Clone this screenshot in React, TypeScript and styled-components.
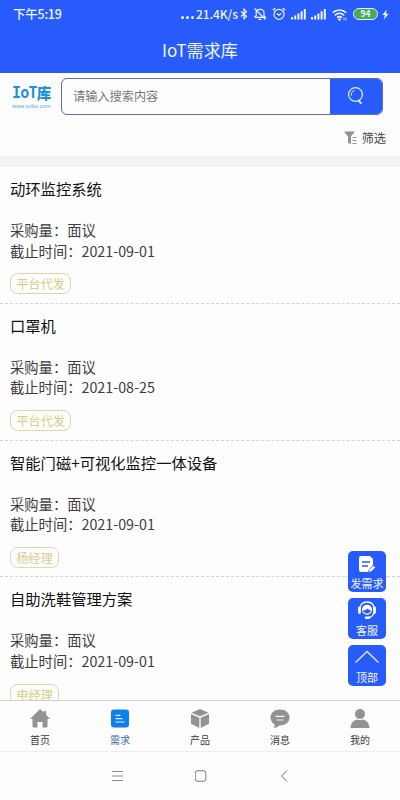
import React from "react";
import styled, { createGlobalStyle } from "styled-components";

const BLUE = "#285bfb";

const GlobalStyle = createGlobalStyle`
  * { box-sizing: border-box; }
  body {
    margin: 0;
    background: #fdfdfd;
    font-family: "Noto Sans CJK SC", "Noto Sans", sans-serif;
  }
`;

const Screen = styled.div`
  position: relative;
  width: 400px;
  height: 800px;
  display: flex;
  flex-direction: column;
  overflow: hidden;
  background: #fdfdfd;
`;

const Header = styled.header`
  flex: none;
  height: 73px;
  background: ${BLUE};
  color: #eef6ff;
`;

const StatusBar = styled.div`
  height: 28px;
  padding: 0 11px 0 13px;
  display: flex;
  align-items: center;
  justify-content: space-between;
`;

const Clock = styled.span`
  font-size: 12.5px;
  font-weight: 500;
  line-height: 28px;
  letter-spacing: -0.25px;
`;

const StatusIcons = styled.div`
  display: flex;
  align-items: center;
  svg { display: block; }
`;

const Dots = styled.span`
  display: flex;
  gap: 2px;
  margin: 6px 2px 0 0;
  i { width: 3px; height: 3px; border-radius: 50%; background: currentColor; }
`;

const Speed = styled.span`
  width: 41px;
  font-size: 12px;
  font-weight: 500;
  line-height: 28px;
  letter-spacing: -0.1px;
  white-space: nowrap;
`;

const Icon = styled.span<{ $gap: number }>`
  margin-left: ${(p) => p.$gap}px;
`;

const Battery = styled.span`
  width: 25px;
  height: 12px;
  margin-left: 6px;
  border: 1.3px solid #e2f3ff;
  border-radius: 6px;
  background: #48a957;
  background-clip: padding-box;
  font-size: 8.5px;
  font-weight: 700;
  line-height: 9.5px;
  text-align: center;
`;

const PageTitle = styled.h1`
  margin: 0;
  height: 43px;
  font-size: 17.1px;
  font-weight: 400;
  line-height: 43px;
  text-align: center;
`;

const SearchPanel = styled.section`
  flex: none;
  height: 84px;
  border-bottom: 1px solid #ececf1;
`;

const SearchRow = styled.div`
  display: flex;
  padding: 5px 17px 0 12px;
`;

const Logo = styled.div`
  width: 49px;
  padding-top: 5px;
  color: #1f8fe0;
`;

const LogoName = styled.div`
  display: flex;
  align-items: center;
  height: 20px;
  font-family: "DejaVu Sans Mono", "Noto Sans CJK SC", monospace;
  font-size: 15px;
  font-weight: 700;
  letter-spacing: -0.8px;
  line-height: 20px;
  white-space: nowrap;
  b {
    font-family: "Noto Sans CJK SC", sans-serif;
    font-size: 14.5px;
    font-weight: 900;
    letter-spacing: 0;
  }
`;

const LogoUrl = styled.div`
  font-family: "Liberation Sans", sans-serif;
  font-size: 5.6px;
  line-height: 6px;
  letter-spacing: 0.1px;
  color: #5aa6df;
`;

const SearchBox = styled.div`
  flex: 1;
  height: 37px;
  display: flex;
  border: 1px solid #5a70a8;
  border-radius: 6px;
  overflow: hidden;
`;

const SearchInput = styled.div`
  flex: 1;
  padding-left: 11px;
  font-size: 12.2px;
  line-height: 34px;
  color: #777;
`;

const SearchButton = styled.button`
  width: 53px;
  margin: -1px -1px -1px 0;
  padding: 0 1px 2px 0;
  border: 0;
  background: ${BLUE};
  display: flex;
  align-items: center;
  justify-content: center;
`;

const FilterRow = styled.div`
  display: flex;
  justify-content: flex-end;
  align-items: center;
  gap: 5px;
  height: 20px;
  margin-top: 13px;
  padding-right: 14px;
  font-size: 12.2px;
  line-height: 20px;
  color: #444;
`;

const Gap = styled.div`
  flex: none;
  height: 10px;
  background: #f4f4f5;
`;

const List = styled.main`
  flex: 1;
  min-height: 0;
  overflow: hidden;
`;

const Item = styled.article`
  height: 136.8px;
  padding: 10px 10px 0;
  border-bottom: 1px dashed #d2d2d6;
`;

const ItemTitle = styled.h2`
  margin: 0 0 20px;
  font-size: 15.3px;
  font-weight: 400;
  line-height: 23px;
  color: #111;
`;

const Meta = styled.p`
  margin: 0;
  height: 20.6px;
  font-size: 14.3px;
  line-height: 20.6px;
  color: #3d3d3d;
`;

const Tag = styled.span<{ $warm?: boolean }>`
  display: block;
  width: fit-content;
  height: 21px;
  margin-top: 12px;
  padding: 0 5.5px;
  border: 1px solid ${(p) => (p.$warm ? "#dfd8b4" : "#dbd7a4")};
  border-radius: 7.5px;
  font-size: 12.1px;
  line-height: 19px;
  color: ${(p) => (p.$warm ? "#dccb8d" : "#d5ce85")};
`;

const FloatStack = styled.aside`
  position: absolute;
  right: 14px;
  top: 551px;
  display: flex;
  flex-direction: column;
  gap: 6px;
`;

const FloatButton = styled.button`
  width: 38px;
  height: 41px;
  padding: 3px 0 0;
  border: 0;
  border-radius: 5px;
  background: ${BLUE};
  color: #f3f8ff;
  display: flex;
  flex-direction: column;
  align-items: center;
  font-family: inherit;
  font-size: 11px;
  line-height: 18px;
  white-space: nowrap;
  svg { flex: none; display: block; }
`;

const TabBar = styled.nav`
  flex: none;
  height: 52px;
  display: grid;
  grid-template-columns: repeat(5, 1fr);
  border-top: 1px solid #cfcfd2;
  border-bottom: 1px solid #eeeef0;
`;

const Tab = styled.div<{ $active?: boolean }>`
  display: flex;
  flex-direction: column;
  align-items: center;
  padding-top: 7px;
  font-size: 10px;
  line-height: 16px;
  color: ${(p) => (p.$active ? "#3c66b4" : "#3c3c3c")};
  svg { display: block; margin-bottom: 3px; }
`;

const SystemNav = styled.footer`
  flex: none;
  height: 48px;
  padding-left: 2px;
  display: flex;
  justify-content: center;
  align-items: center;
  gap: 70px;
`;

const Signal = () => (
  <svg width="15" height="12" viewBox="0 0 15 12" fill="currentColor">
    <path d="M0 9h2v2.500H0zM3.200 7.500h2v4h-2zM6.400 5.500h2v6h-2zM9.600 3.200h2v8.300h-2zM12.800 1h2v10.500h-2z" />
  </svg>
);

const Bluetooth = () => (
  <svg width="8" height="12" viewBox="0 0 8 12" fill="none" stroke="currentColor" strokeWidth="1.200">
    <path d="M1 3.500 6.500 8.300 4 10.800V1.200l2.500 2.500L1 8.500" />
  </svg>
);

const BellOff = () => (
  <svg width="14" height="14" viewBox="0 0 14 14" fill="none" stroke="currentColor" strokeWidth="1.200">
    <path d="M1.500 10.300h10.800L11 8.800V5.500C11 3.500 9.300 2.300 7 2.300S3.200 3.500 3.200 5.500v3.300L1.500 10.300M5.500 12.300h3M1.500 1.500l11 11" />
  </svg>
);

const Alarm = () => (
  <svg width="14" height="14" viewBox="0 0 14 14" fill="none" stroke="currentColor" strokeWidth="1.200">
    <circle cx="7" cy="7.300" r="5" />
    <path d="M4.800 6.500 7 8.200l2.300-1.700M.8 3.300 3.300 1M13.200 3.300 10.700 1" />
  </svg>
);

const Wifi = () => (
  <svg width="15" height="13" viewBox="0 0 15 13" fill="none" stroke="currentColor" strokeWidth="1.600">
    <path d="M.7 4.700c4-3.700 9.600-3.700 13.600 0M2.800 7.300c2.800-2.600 6.600-2.600 9.400 0M5 9.700c1.600-1.300 3.400-1.300 5 0" />
    <path d="M6 11h3l-1.500 1.800zM12 9.500v3M14 9.500v3" strokeWidth=".8" fill="currentColor" />
  </svg>
);

const Bolt = () => (
  <svg width="7" height="11" viewBox="0 0 7 11" fill="currentColor">
    <path d="M4.700.5.300 6h2.500L2 10.500 6.700 4.700H4z" />
  </svg>
);

const SearchIcon = () => (
  <svg width="18" height="20" viewBox="0 0 18 20" fill="none" stroke="#d5ecff" strokeLinecap="round">
    <circle cx="8.500" cy="8.500" r="6.900" strokeWidth="1.300" />
    <path d="M4.300 9.200c-.3-2.300 1-4.200 3-4.800" strokeWidth="1" />
    <path d="m11.800 14.700 2 2.500" strokeWidth="2" />
  </svg>
);

const FilterIcon = () => (
  <svg width="13" height="14" viewBox="0 0 13 14" fill="#929292">
    <path d="M0 .5h11L7 5.500v8L4 11.500v-6z" />
    <path d="M8.500 6h4v1h-4zM8.500 9h4v1h-4zM8.500 12h4v1h-4z" />
  </svg>
);

const PostIcon = () => (
  <svg width="18" height="20" viewBox="0 -1 18 20">
    <path d="M3 1h9l3 3v6l-5 7H3a2 2 0 0 1-2-2V3a2 2 0 0 1 2-2z" fill="#fff" />
    <path d="M4 7h8M4 11h6" stroke={BLUE} strokeWidth="1.500" />
    <path d="m10.500 17.500.6-2.800 4.300-4.200 2 2-4.200 4.200z" fill="#fff" stroke={BLUE} strokeWidth=".7" />
  </svg>
);

const ServiceIcon = () => (
  <svg width="20" height="20" viewBox="0 0 20 20" fill="none" stroke="#fff">
    <path d="M3 8C3 3.500 5.800 1 10 1s7 2.500 7 7M17 10c-.2 4-2.500 6.500-6 6.500" strokeWidth="1.300" />
    <circle cx="10" cy="8.800" r="5" fill="#fff" stroke="none" />
    <path d="M6 9.300c2 .2 3.500-.5 4.500-1.800 1 1.200 2 1.800 3.500 1.800-.2 4-7.500 4.500-8 0z" fill={BLUE} stroke="none" />
    <path d="M2.500 7v4.500M17.500 7v4.500" strokeWidth="2.800" strokeLinecap="round" />
    <path d="M9 16.700h3" strokeWidth="2.500" strokeLinecap="round" />
  </svg>
);

const TopIcon = () => (
  <svg width="26" height="20" viewBox="0 0 26 20" fill="none" stroke="#e4efff" strokeWidth="1.300">
    <path d="M1.500 14.500 13 3.500l11.500 11" />
  </svg>
);

const HomeIcon = () => (
  <svg width="20" height="21" viewBox="0 0 20 21" fill="#929294">
    <path d="m10 1 3.800 3.600V3H16v3.800l4 4.200h-2.500v7c0 1-.4 1.500-1.400 1.500h-3.600V14h-5v5.500H4c-1 0-1.500-.5-1.500-1.500v-7H0z" />
  </svg>
);

const DemandIcon = () => (
  <svg width="20" height="21" viewBox="0 0 20 21">
    <rect x="1" y="1.500" width="18" height="18" rx="3" fill="#0d80ee" />
    <path d="M5.500 7.300h5M5.500 10.700h7M5.500 14h9" stroke="#e3f4ff" strokeWidth="1.200" />
  </svg>
);

const ProductIcon = () => (
  <svg width="20" height="21" viewBox="0 0 20 21" fill="#929294">
    <path d="m10 1 8.500 3.700L10 8.300 1.500 4.700zM1 6l8.300 3.700V20L1 15.800zM19 6l-8.300 3.700V20l8.300-4.200z" />
  </svg>
);

const MessageIcon = () => (
  <svg width="20" height="21" viewBox="0 0 20 21">
    <path d="M10 1.500c5.400 0 9.500 3.400 9.500 8s-4.100 8-9.500 8H9.200C7.800 19 6 19.800 3.800 20c.7-1 1-2.200.8-3.500C2 15 .5 12.500.5 9.500c0-4.600 4.100-8 9.500-8z" fill="#929294" />
    <path d="M5.500 8.300h9M6.500 12h7" stroke="#f4f4f4" strokeWidth="1.200" />
  </svg>
);

const PersonIcon = () => (
  <svg width="20" height="21" viewBox="0 0 20 21" fill="#929294">
    <circle cx="10" cy="6" r="5" />
    <path d="M.5 20c0-5 3.500-8 7-8.500 1.500.7 3.500.7 5 0 3.500.5 7 3.500 7 8.500z" />
  </svg>
);

const demands = [
  { title: "动环监控系统", date: "2021-09-01", contact: "平台代发" },
  { title: "口罩机", date: "2021-08-25", contact: "平台代发" },
  { title: "智能门磁+可视化监控一体设备", date: "2021-09-01", contact: "杨经理", warm: true },
  { title: "自助洗鞋管理方案", date: "2021-09-01", contact: "申经理" },
];

const tabs = [
  { label: "首页", icon: <HomeIcon /> },
  { label: "需求", icon: <DemandIcon />, active: true },
  { label: "产品", icon: <ProductIcon /> },
  { label: "消息", icon: <MessageIcon /> },
  { label: "我的", icon: <PersonIcon /> },
];

export default function App() {
  return (
    <>
      <GlobalStyle />
      <Screen>
        <Header>
          <StatusBar>
            <Clock>下午5:19</Clock>
            <StatusIcons>
              <Dots><i /><i /><i /></Dots>
              <Speed>21.4K/s</Speed>
              <Icon $gap={3}><Bluetooth /></Icon>
              <Icon $gap={5}><BellOff /></Icon>
              <Icon $gap={5}><Alarm /></Icon>
              <Icon $gap={5}><Signal /></Icon>
              <Icon $gap={5}><Signal /></Icon>
              <Icon $gap={6}><Wifi /></Icon>
              <Battery>94</Battery>
              <Icon $gap={4}><Bolt /></Icon>
            </StatusIcons>
          </StatusBar>
          <PageTitle>IoT需求库</PageTitle>
        </Header>

        <SearchPanel>
          <SearchRow>
            <Logo>
              <LogoName>IoT<b>库</b></LogoName>
              <LogoUrl>www.iotku.com</LogoUrl>
            </Logo>
            <SearchBox>
              <SearchInput>请输入搜索内容</SearchInput>
              <SearchButton aria-label="搜索"><SearchIcon /></SearchButton>
            </SearchBox>
          </SearchRow>
          <FilterRow><FilterIcon />筛选</FilterRow>
        </SearchPanel>
        <Gap />

        <List>
          {demands.map((d) => (
            <Item key={d.title}>
              <ItemTitle>{d.title}</ItemTitle>
              <Meta>采购量：面议</Meta>
              <Meta>截止时间：{d.date}</Meta>
              <Tag $warm={d.warm}>{d.contact}</Tag>
            </Item>
          ))}
        </List>

        <TabBar>
          {tabs.map((t) => (
            <Tab key={t.label} $active={t.active}>{t.icon}{t.label}</Tab>
          ))}
        </TabBar>

        <SystemNav>
          <svg width="13" height="12" viewBox="0 0 13 12" stroke="#8a8a8a" fill="none">
            <path d="M0 1.500h11M0 6h11M0 10.500h11" />
          </svg>
          <svg width="12" height="12" viewBox="0 0 12 12" stroke="#777" fill="none">
            <rect x=".2" y=".7" width="10.600" height="10.600" rx="2.500" />
          </svg>
          <svg width="13" height="12" viewBox="0 0 13 12" stroke="#777" fill="none">
            <path d="M10 .5 4.500 6l5.500 5.500" />
          </svg>
        </SystemNav>

        <FloatStack>
          <FloatButton><PostIcon />发需求</FloatButton>
          <FloatButton><ServiceIcon />客服</FloatButton>
          <FloatButton><TopIcon />顶部</FloatButton>
        </FloatStack>
      </Screen>
    </>
  );
}
